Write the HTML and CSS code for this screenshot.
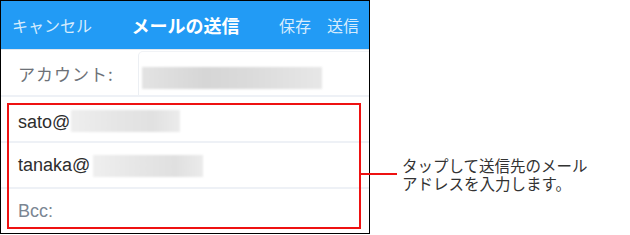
FILE: index.html
```html
<!DOCTYPE html>
<html lang="ja">
<head>
<meta charset="utf-8">
<title>メールの送信</title>
<link rel="stylesheet" href="styles.css">
</head>
<body>
<div class="canvas">
  <div class="phone">
    <header class="nav">
      <div class="nav-left"><span class="nav-btn">キャンセル</span></div>
      <div class="nav-title">メールの送信</div>
      <div class="nav-right"><span class="nav-btn">保存</span><span class="nav-btn">送信</span></div>
    </header>
    <div class="row account">
      <span class="account-label">アカウント:</span>
      <div class="account-field"><span class="blur blur-account"></span></div>
    </div>
    <div class="row recipient first">
      <span class="addr">sato@</span><span class="blur blur-sato"></span>
    </div>
    <div class="row recipient">
      <span class="addr">tanaka@</span><span class="blur blur-tanaka"></span>
    </div>
    <div class="row recipient last">
      <span class="bcc">Bcc:</span>
    </div>
  </div>
  <div class="note">
    <span class="note-line">タップして送信先のメール</span>
    <span class="note-line">アドレスを入力します。</span>
  </div>
  <div class="highlight"></div>
  <div class="connector"></div>
</div>
</body>
</html>
```
FILE: styles.css
```css
html, body {
  margin: 0;
  padding: 0;
  background: #ffffff;
}

.canvas {
  position: relative;
  width: 630px;
  height: 235px;
  display: flex;
  align-items: flex-start;
  font-family: "Noto Sans CJK JP", "Liberation Sans", sans-serif;
}

.phone {
  width: 368px;
  height: 232px;
  border: 1px solid #000;
  background: #ffffff;
  display: flex;
  flex-direction: column;
  overflow: hidden;
  flex: none;
}

.nav {
  height: 48px;
  flex: none;
  background: #229bf5;
  border-bottom: 1px solid #e3e7ec;
  display: grid;
  grid-template-columns: 1fr auto 1fr;
  align-items: center;
  padding: 0 10px 0 11px;
}

.nav-left {
  display: flex;
  justify-content: flex-start;
}

.nav-right {
  display: flex;
  justify-content: flex-end;
  gap: 16px;
}

.nav-btn {
  font-size: 16px;
  line-height: 20px;
  color: #d6ecfd;
}

.nav-title {
  font-size: 18px;
  font-weight: 700;
  line-height: 22px;
  color: #ffffff;
}

.row {
  flex: none;
  display: flex;
  align-items: center;
  border-bottom: 2px solid #eef1f6;
  padding-left: 17px;
}

.account {
  height: 45px;
  padding-left: 0;
}

.account-label {
  width: 120px;
  padding-left: 17px;
  flex: none;
  font-size: 17px;
  letter-spacing: 1px;
  color: #6d7177;
  margin-top: 2px;
}

.account-field {
  align-self: stretch;
  flex: 1;
  margin-top: 1px;
  border-top: 1px solid #f1f3f6;
  border-left: 1px solid #eceff3;
  border-top-left-radius: 5px;
  display: flex;
  align-items: center;
  padding-left: 3px;
}

.recipient {
  height: 44px;
}

.recipient.first {
  padding-top: 6px;
  height: 38px;
}

.recipient.last {
  border-bottom: none;
}

.addr {
  font-family: "Liberation Sans", Arial, sans-serif;
  font-size: 18px;
  color: #2d2d2d;
}

.bcc {
  font-family: "Liberation Sans", Arial, sans-serif;
  font-size: 18px;
  color: #7b8693;
}

.blur {
  display: block;
  height: 22px;
  background: linear-gradient(90deg, #e3e3e3 0%, #d6d6d6 35%, #dbdbdb 60%, #e7e7e7 100%);
  filter: blur(1px);
}

.blur-account {
  width: 180px;
  margin-top: 8px;
}

.blur-sato {
  width: 109px;
  margin-left: 1px;
  margin-top: -2px;
  background: linear-gradient(90deg, #eeeeee 0%, #e6e6e6 40%, #e1e1e1 75%, #ececec 100%);
}

.blur-tanaka {
  width: 110px;
  margin-left: 3px;
  margin-top: 2px;
  background: linear-gradient(90deg, #efefef 0%, #e6e6e6 40%, #e0e0e0 75%, #ebebeb 100%);
}

.note {
  margin: 156px 0 0 32px;
  display: flex;
  flex-direction: column;
  font-size: 15.5px;
  color: #333333;
}

.note-line {
  display: block;
  height: 18px;
  line-height: 18px;
  white-space: nowrap;
}

.highlight {
  position: absolute;
  left: 7px;
  top: 103px;
  width: 354px;
  height: 126px;
  box-sizing: border-box;
  border: 2px solid #ee1111;
}

.connector {
  position: absolute;
  left: 361px;
  top: 173px;
  width: 36px;
  height: 2px;
  background: #ee1111;
}
```
